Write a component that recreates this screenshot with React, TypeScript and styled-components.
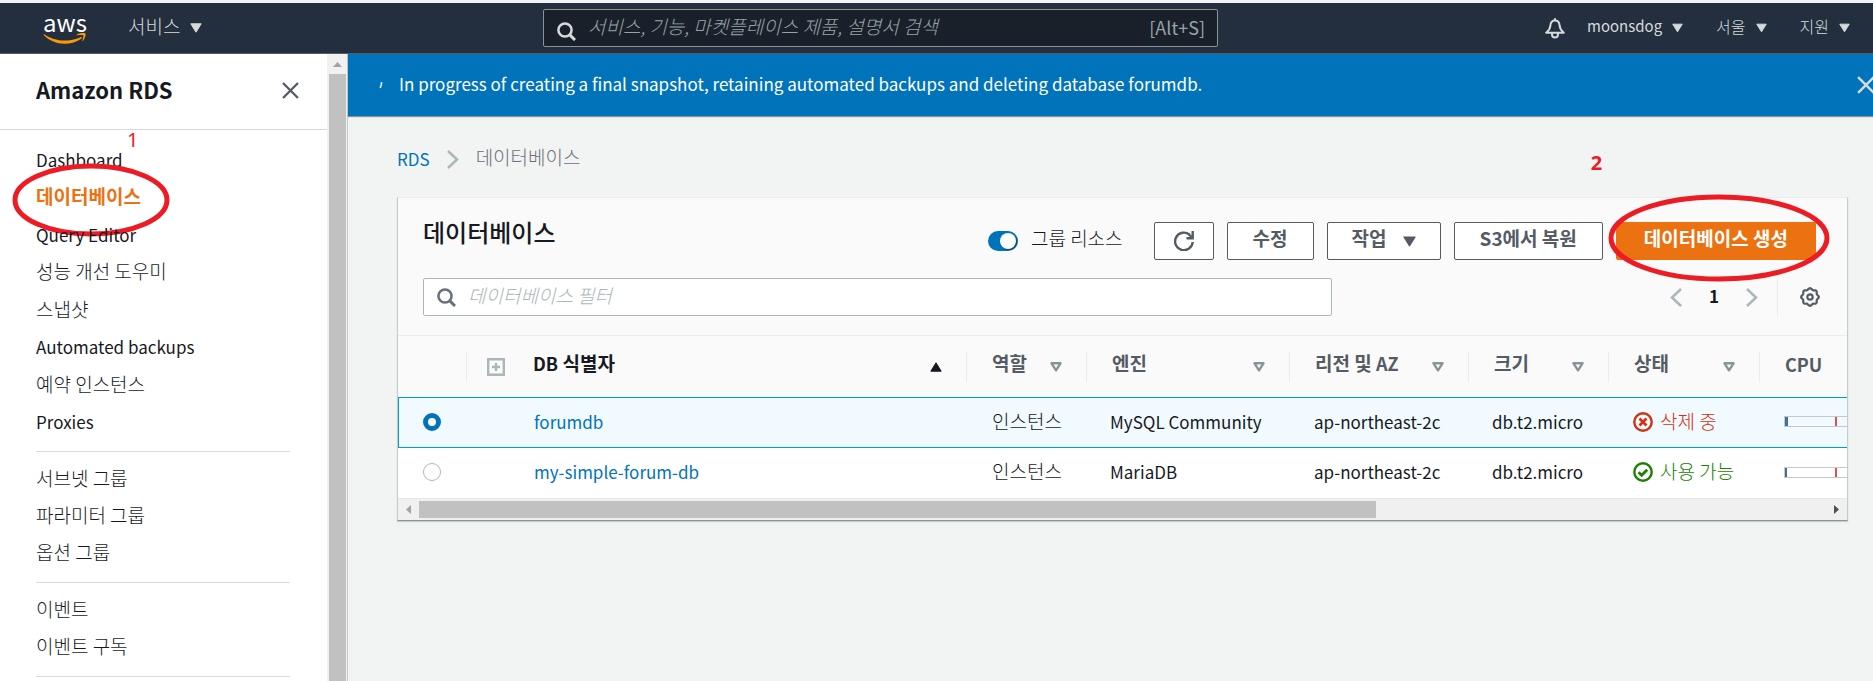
import React from "react";
import styled, { createGlobalStyle, css } from "styled-components";

const color = {
  ink: "#16191f",
  slate: "#545b64",
  muted: "#687078",
  soft: "#879596",
  pale: "#aab7b8",
  line: "#eaeded",
  rule: "#d5dbdb",
  link: "#0073bb",
  orange: "#ec7211",
  navy: "#232f3e",
  red: "#ed1c24",
};

const family = `"Noto Sans CJK KR", "Noto Sans", sans-serif`;

const GlobalStyle = createGlobalStyle`
  * { box-sizing: border-box; }
  body {
    margin: 0;
    background: #f2f3f3;
    color: ${color.ink};
    font: 400 17px/24px ${family};
    overflow-x: hidden;
  }
  button, input { font: inherit; color: inherit; }
  button { cursor: pointer; }
  a { text-decoration: none; color: inherit; }
`;

const ko = css`
  font-size: 19px;
  font-weight: 300;
`;

const Page = styled.div`
  display: flex;
  flex-direction: column;
  min-height: 100vh;
`;

/* ---------- top bar ---------- */

const TopBar = styled.header`
  display: grid;
  grid-template-columns: minmax(0, 543fr) minmax(0, 675fr) minmax(0, 655fr);
  align-items: center;
  height: 54px;
  border-top: 3px solid #f1f3f4;
  border-bottom: 1px solid ${color.slate};
  background: ${color.navy};
  color: ${color.rule};
`;

const Brand = styled.div`
  display: flex;
  align-items: center;
  gap: 41px;
  padding-left: 43px;
`;

const Logo = styled.a`
  display: flex;
  flex-direction: column;
  align-items: center;
  width: 44px;
  color: #fff;
  font-size: 24px;
  font-weight: 400;
  line-height: 20px;
  svg {
    display: block;
  }
`;

const MenuButton = styled.button<{ $small?: boolean }>`
  display: flex;
  align-items: center;
  gap: 10px;
  padding: 0;
  border: 0;
  background: none;
  ${ko}
  font-size: ${(p) => (p.$small ? "16px" : "19px")};
  line-height: 24px;
  span {
    padding-bottom: 4px;
  }
`;

const AccountName = styled.span`
  font-size: 15px;
  font-weight: 400;
`;

const GlobalSearch = styled.label`
  display: flex;
  align-items: center;
  gap: 12px;
  height: 38px;
  padding: 0 12px 0 13px;
  border: 1px solid ${color.soft};
  border-radius: 2px;
  background: #1a202a;
  color: #95a5a6;
  input {
    flex: 1;
    min-width: 0;
    padding: 0 0 4px;
    border: 0;
    outline: 0;
    background: none;
    ${ko}
    font-style: italic;
  }
  input::placeholder {
    color: #95a5a6;
    opacity: 1;
  }
  span {
    padding-bottom: 2px;
    font-size: 18px;
  }
  svg {
    margin-top: 6px;
    color: ${color.rule};
  }
`;

const Account = styled.nav`
  display: flex;
  align-items: center;
  justify-content: flex-end;
  gap: 33px;
  padding-right: 23px;
`;

const Alerts = styled.div`
  display: flex;
  align-items: center;
  gap: 22px;
`;

const IconButton = styled.button`
  display: flex;
  align-items: center;
  justify-content: center;
  padding: 0;
  border: 0;
  background: none;
`;

/* ---------- side navigation ---------- */

const Body = styled.div`
  display: flex;
  flex: 1;
`;

const Side = styled.aside`
  display: flex;
  flex: 0 0 348px;
  border-right: 1px solid #c8cccc;
  background: #fff;
`;

const SidePane = styled.div`
  flex: 1;
`;

const SideHead = styled.div`
  display: flex;
  align-items: center;
  justify-content: space-between;
  height: 76px;
  padding: 0 28px 2px 36px;
  border-bottom: 1px solid ${color.rule};
  color: ${color.slate};
  h2 {
    margin: 0;
    padding-bottom: 4px;
    color: ${color.ink};
    font-size: 22px;
    font-weight: 700;
  }
`;

const NavList = styled.nav`
  padding: 12px 37px 4px 36px;
`;

const NavGroup = styled.ul<{ $height: number }>`
  display: grid;
  grid-auto-rows: 1fr;
  align-items: center;
  height: ${(p) => p.$height}px;
  margin: 0;
  padding: 0;
  list-style: none;
`;

const NavRule = styled.hr`
  height: 1px;
  margin: 9px 0;
  border: 0;
  background: ${color.rule};
`;

const NavItem = styled.li`
  position: relative;
`;

const NavLink = styled.a<{ $ko?: boolean; $active?: boolean }>`
  display: block;
  ${(p) => p.$ko && ko}
  ${(p) =>
    p.$active &&
    css`
      color: ${color.orange};
      font-weight: 700;
    `}
  padding-bottom: ${(p) => (p.$ko ? "4px" : "2px")};
`;

const VTrack = styled.div`
  display: flex;
  flex-direction: column;
  align-items: center;
  width: 20px;
  padding-top: 8px;
  gap: 7px;
  background: #f1f1f1;
  color: #a3a3a3;
  svg {
    display: block;
  }
`;

const VThumb = styled.div`
  flex: 1;
  width: 17px;
  background: #c1c1c1;
`;

/* ---------- main column ---------- */

const Main = styled.main`
  flex: 1;
  min-width: 0;
`;

const Banner = styled.div`
  display: flex;
  align-items: center;
  height: 62px;
  padding: 0 0 0 31px;
  background: ${color.link};
  box-shadow: 0 1px 1px #8d9495;
  color: #fff;
  overflow: hidden;
  p {
    flex: 1;
    margin: 0 0 0 16px;
    padding-bottom: 2px;
  }
`;

const CloseBanner = styled(IconButton)`
  margin-right: -2px;
  color: ${color.rule};
`;

const Content = styled.div`
  padding: 29px 25px 40px 49px;
`;

const Crumbs = styled.nav`
  display: flex;
  align-items: center;
  gap: 17px;
  height: 28px;
  color: ${color.link};
  svg {
    color: ${color.pale};
  }
  span {
    ${ko}
    padding-bottom: 4px;
    color: ${color.muted};
  }
`;

const Card = styled.section`
  margin-top: 24px;
  border: 1px solid #c5cccd;
  border-top-color: ${color.line};
  border-bottom-color: ${color.soft};
  background: #fafafa;
  box-shadow: 0 1px 1px #c9cfd0;
`;

const CardHead = styled.div`
  display: flex;
  flex-direction: column;
  gap: 18px;
  padding: 24px 25px 19px;
  border-bottom: 1px solid ${color.line};
`;

const TitleRow = styled.div`
  display: flex;
  align-items: flex-start;
  justify-content: space-between;
  padding-right: 6px;
  h1 {
    margin: 0;
    font-size: 24px;
    font-weight: 500;
    line-height: 20px;
  }
`;

const Actions = styled.div`
  display: flex;
  align-items: center;
  gap: 13px;
`;

const GroupToggle = styled.label`
  display: flex;
  align-items: center;
  gap: 13px;
  margin-right: 18px;
  span {
    ${ko}
    padding-bottom: 6px;
  }
`;

const Switch = styled.input`
  appearance: none;
  display: flex;
  align-items: center;
  justify-content: flex-end;
  width: 30px;
  height: 20px;
  margin: 0;
  padding: 2px;
  border-radius: 10px;
  background: ${color.link};
  &::after {
    content: "";
    width: 16px;
    height: 16px;
    border-radius: 50%;
    background: #fff;
    box-shadow: 1px 1px 1px #16415f;
  }
`;

const Button = styled.button<{ $primary?: boolean; $pad?: number }>`
  display: flex;
  align-items: center;
  gap: 16px;
  height: 38px;
  padding: 0 ${(p) => p.$pad ?? 25}px;
  border: 1px solid ${(p) => (p.$primary ? color.orange : color.slate)};
  border-radius: 2px;
  background: ${(p) => (p.$primary ? color.orange : "#fff")};
  color: ${(p) => (p.$primary ? "#fff" : color.slate)};
  font-size: 19px;
  font-weight: 700;
  line-height: 24px;
  white-space: nowrap;
  span {
    padding-bottom: 6px;
  }
`;

const Marked = styled.div`
  position: relative;
`;

const FilterRow = styled.div`
  display: flex;
  align-items: center;
  justify-content: space-between;
`;

const Filter = styled.label`
  display: flex;
  align-items: center;
  gap: 12px;
  width: 65%;
  height: 38px;
  padding: 0 13px;
  border: 1px solid ${color.pale};
  border-radius: 2px;
  background: #fff;
  color: ${color.muted};
  input {
    flex: 1;
    padding: 0 0 4px;
    border: 0;
    outline: 0;
    background: none;
    ${ko}
    font-style: italic;
  }
  input::placeholder {
    color: ${color.pale};
    opacity: 1;
  }
`;

const Pager = styled.div`
  display: flex;
  align-items: center;
  gap: 27px;
  height: 38px;
  color: ${color.pale};
  b {
    padding-bottom: 2px;
    color: ${color.ink};
    font-weight: 600;
  }
`;

const Settings = styled(IconButton)`
  height: 38px;
  margin-left: -8px;
  padding: 0 2px 0 22px;
  border-left: 1px solid ${color.line};
  color: ${color.slate};
`;

/* ---------- table ---------- */

const TableClip = styled.div`
  overflow: hidden;
`;

const Table = styled.table`
  width: 100%;
  border-collapse: separate;
  border-spacing: 0;
  table-layout: fixed;
  background: #fff;
`;

const Th = styled.th<{ $width?: number; $sorted?: boolean }>`
  width: ${(p) => (p.$width ? `${p.$width}px` : "auto")};
  height: 61px;
  padding: 0;
  background: #fafafa;
  color: ${(p) => (p.$sorted ? color.ink : color.slate)};
  text-align: left;
  vertical-align: middle;
`;

const HeadCell = styled.div<{ $last?: boolean; $tight?: boolean }>`
  display: flex;
  align-items: center;
  gap: ${(p) => (p.$tight ? 28 : 20)}px;
  height: 30px;
  padding: 0 24px 0 ${(p) => (p.$tight ? 20 : 25)}px;
  border-right: ${(p) => (p.$last ? "0" : `1px solid ${color.line}`)};
  svg {
    flex: none;
  }
`;

const HeadLabel = styled.span`
  flex: 1;
  padding-bottom: 8px;
  font-size: 19px;
  font-weight: 700;
  white-space: nowrap;
`;

const LatinLabel = styled.span`
  font-size: 18px;
`;

const CpuLabel = styled.span`
  padding-bottom: 6px;
  font-size: 18px;
  font-weight: 700;
`;

const Row = styled.tr<{ $selected?: boolean }>`
  background: ${(p) => (p.$selected ? "#f1faff" : "#fff")};
  td {
    height: ${(p) => (p.$selected ? 51 : 50)}px;
    border-top: 1px solid ${(p) => (p.$selected ? "#00a1c9" : "#fff")};
    border-bottom: 1px solid ${(p) => (p.$selected ? "#00a1c9" : "#fff")};
  }
  td:first-child {
    border-left: 1px solid ${(p) => (p.$selected ? "#00a1c9" : "#fff")};
  }
`;

const Td = styled.td<{ $left?: number }>`
  padding: 0 0 2px ${(p) => p.$left ?? 25}px;
  overflow: hidden;
  white-space: nowrap;
  vertical-align: middle;
`;

const RoleText = styled.div`
  ${ko}
  padding-bottom: 2px;
`;

const DbLink = styled.a`
  color: ${color.link};
`;

const Radio = styled.input`
  appearance: none;
  display: block;
  width: 18px;
  height: 18px;
  margin: 0;
  border: 1px solid ${color.pale};
  border-radius: 50%;
  background: #fff;
  &:checked {
    border: 5px solid ${color.link};
  }
`;

const Status = styled.div<{ $color: string }>`
  display: flex;
  align-items: center;
  gap: 7px;
  color: ${(p) => p.$color};
  span {
    ${ko}
    padding-bottom: 2px;
  }
`;

const Meter = styled.div`
  display: flex;
  width: 120px;
  height: 11px;
  border: 1px solid #c5c8ca;
`;

const MeterFill = styled.i<{ $width: number }>`
  width: ${(p) => p.$width}px;
  background: #486f92;
`;

const MeterMark = styled.i<{ $gap: number }>`
  width: 2px;
  margin-left: ${(p) => p.$gap}px;
  background: #df4f58;
`;

const HTrack = styled.div`
  display: flex;
  align-items: center;
  height: 22px;
  padding: 0 8px;
  gap: 8px;
  border-top: 1px solid #e6e8e8;
  background: #f0f0f0;
  color: #a3a3a3;
  svg {
    flex: none;
  }
  svg:last-child {
    color: #505050;
  }
`;

const HRail = styled.div`
  flex: 1;
  height: 17px;
  div {
    width: 68%;
    height: 17px;
    background: #c1c1c1;
  }
`;

/* ---------- hand-drawn marks ---------- */

const Ring = styled.svg<{ $x: number; $y: number }>`
  position: absolute;
  left: ${(p) => p.$x}px;
  top: ${(p) => p.$y}px;
  overflow: visible;
  pointer-events: none;
  fill: none;
  stroke: ${color.red};
`;

const Step = styled.span<{ $x: number; $y: number; $bold?: boolean }>`
  position: absolute;
  left: ${(p) => p.$x}px;
  top: ${(p) => p.$y}px;
  color: ${color.red};
  font-family: "Noto Sans", sans-serif;
  font-size: 20px;
  font-weight: ${(p) => (p.$bold ? 700 : 400)};
  pointer-events: none;
`;

/* ---------- icons ---------- */

const Caret = ({ w = 12, h = 10 }: { w?: number; h?: number }) => (
  <svg width={w} height={h} viewBox="0 0 12 10" aria-hidden="true">
    <path d="M.8.8h10.400L6 9.200z" fill="currentColor" stroke="currentColor" strokeLinejoin="round" />
  </svg>
);

const CaretUp = () => (
  <svg width="12" height="10" viewBox="0 0 12 10" aria-hidden="true">
    <path d="M.8 9.200h10.400L6 .8z" fill="currentColor" stroke="currentColor" strokeLinejoin="round" />
  </svg>
);

const CaretOutline = () => (
  <svg width="12" height="10" viewBox="0 0 12 10" fill="none" stroke={color.soft} strokeWidth="2.400" strokeLinejoin="round" aria-hidden="true">
    <path d="M1.500 1.300h9L6 8.300z" />
  </svg>
);

const Cross = ({ size = 17 }: { size?: number }) => (
  <svg width={size} height={size} viewBox="0 0 17 17" fill="none" stroke="currentColor" strokeWidth="2.300" aria-hidden="true">
    <path d="M1 1l15 15M16 1L1 16" />
  </svg>
);

const Search = () => (
  <svg width="19" height="19" viewBox="0 0 19 19" fill="none" stroke="currentColor" strokeWidth="2.500" aria-hidden="true">
    <circle cx="8" cy="8" r="6.600" />
    <path d="M12.600 12.600l5.400 5.400" strokeWidth="3" />
  </svg>
);

const Chevron = ({ left }: { left?: boolean }) => (
  <svg width="12" height="19" viewBox="0 0 12 19" fill="none" stroke="currentColor" strokeWidth="2.500" aria-hidden="true">
    <path d={left ? "M11 1L2 9.500 11 18" : "M1 1l9 8.500L1 18"} />
  </svg>
);

const Bell = () => (
  <svg width="20" height="21" viewBox="0 0 20 21" fill="none" stroke="currentColor" strokeWidth="2" strokeLinejoin="round" aria-hidden="true">
    <path d="M10 2.500c-3.200 0-4.400 2.200-4.600 5-.2 3.500-1.500 5-4.200 7.200h17.600c-2.700-2.200-4-3.700-4.200-7.200-.2-2.800-1.400-5-4.600-5z" />
    <path d="M10 .3v2" />
    <path d="M7 15v1.500a3 3 0 0 0 6 0V15" />
  </svg>
);

const Refresh = () => (
  <svg width="20" height="20" viewBox="0 0 20 20" fill="none" stroke="currentColor" strokeWidth="2.400" aria-hidden="true">
    <path d="M18.700 11A8.800 8.800 0 1 1 15.500 3.600" />
    <path d="M18.700 0v7.200H12.500" />
    <path d="M14.500 3l4 4" />
  </svg>
);

const Gear = () => {
  const points = Array.from({ length: 64 }, (_, i) => {
    const a = (i / 64) * Math.PI * 2;
    const r = 8.1 + 0.75 * Math.cos(a * 8);
    return `${(10 + r * Math.cos(a)).toFixed(2)},${(10 + r * Math.sin(a)).toFixed(2)}`;
  }).join(" ");
  return (
    <svg width="20" height="20" viewBox="0 0 20 20" fill="none" stroke="currentColor" strokeWidth="2.200" aria-hidden="true">
      <polygon points={points} />
      <circle cx="10" cy="10" r="2.700" />
    </svg>
  );
};

const ExpandBox = () => (
  <svg width="18" height="18" viewBox="0 0 18 18" fill="none" stroke={color.pale} strokeWidth="2.400" aria-hidden="true">
    <path d="M1.200 1.200h15.600v15.600H1.200zM9 5v8M5 9h8" />
  </svg>
);

const StatusIcon = ({ ok }: { ok: boolean }) => (
  <svg width="20" height="20" viewBox="0 0 20 20" fill="none" stroke="currentColor" strokeWidth="2.400" aria-hidden="true">
    <circle cx="10" cy="10" r="8.700" />
    <path d={ok ? "M5.500 10.200l3.200 3 5.500-5.500" : "M6.500 6.500l7 7M13.500 6.500l-7 7"} strokeWidth="2.800" />
  </svg>
);

const Smile = () => (
  <svg width="44" height="12" viewBox="0 0 44 12" fill="#f90" aria-hidden="true">
    <path d="M1.300 2.300C7 6.300 14 8.600 21.500 8.600c5.500 0 11-1.200 16.200-3.400 1-.4 1.800.6.900 1.300C34 10 27.500 11.700 21.700 11.700 13.600 11.700 6.400 8.700.9 3.200c-.5-.5-.1-1.200.4-.9z" />
    <path d="M33.500 2.800c2.500-1.900 7-2.300 8.700-1.500 1 .8.200 5-2.200 7.400-.5.400-.9.200-.7-.3.600-1.500 1.500-4.300 1-5-.6-.7-4.200-.5-6.200-.2-.6.100-.9-.2-.6-.4z" />
  </svg>
);

const Spinner = () => (
  <svg width="4" height="8" viewBox="0 0 4 8" aria-hidden="true">
    <path d="M2.600 1q0 3-1.400 6" fill="none" stroke="#e5f2fa" strokeWidth="1.600" />
  </svg>
);

const ArrowTip = ({ d, w, h }: { d: string; w: number; h: number }) => (
  <svg width={w} height={h} viewBox={`0 0 ${w} ${h}`} aria-hidden="true">
    <path d={d} fill="currentColor" />
  </svg>
);

/* ---------- data ---------- */

type NavEntry = { label: string; ko?: boolean; active?: boolean };

const navGroups: { height: number; items: NavEntry[] }[] = [
  {
    height: 300,
    items: [
      { label: "Dashboard" },
      { label: "데이터베이스", ko: true, active: true },
      { label: "Query Editor" },
      { label: "성능 개선 도우미", ko: true },
      { label: "스냅샷", ko: true },
      { label: "Automated backups" },
      { label: "예약 인스턴스", ko: true },
      { label: "Proxies" },
    ],
  },
  {
    height: 112,
    items: [
      { label: "서브넷 그룹", ko: true },
      { label: "파라미터 그룹", ko: true },
      { label: "옵션 그룹", ko: true },
    ],
  },
  {
    height: 75,
    items: [
      { label: "이벤트", ko: true },
      { label: "이벤트 구독", ko: true },
    ],
  },
];

const columns: { label: React.ReactNode; key: string; width: number }[] = [
  { key: "role", label: "역할", width: 120 },
  { key: "engine", label: "엔진", width: 203 },
  { key: "region", label: <>리전 및 <LatinLabel>AZ</LatinLabel></>, width: 179 },
  { key: "size", label: "크기", width: 140 },
  { key: "status", label: "상태", width: 151 },
];

const databases = [
  { id: "forumdb", engine: "MySQL Community", status: "삭제 중", ok: false, cpu: 3 },
  { id: "my-simple-forum-db", engine: "MariaDB", status: "사용 가능", ok: true, cpu: 2 },
];

export default function App() {
  return (
    <Page>
      <GlobalStyle />
      <TopBar>
        <Brand>
          <Logo href="#">
            aws
            <Smile />
          </Logo>
          <MenuButton>
            <span>서비스</span> <Caret />
          </MenuButton>
        </Brand>
        <GlobalSearch>
          <Search />
          <input aria-label="검색" placeholder="서비스, 기능, 마켓플레이스 제품, 설명서 검색" />
          <span>[Alt+S]</span>
        </GlobalSearch>
        <Account>
          <Alerts>
            <IconButton aria-label="알림">
              <Bell />
            </IconButton>
            <MenuButton $small>
              <AccountName>moonsdog</AccountName> <Caret w={11} />
            </MenuButton>
          </Alerts>
          <MenuButton $small>
            <span>서울</span> <Caret w={11} />
          </MenuButton>
          <MenuButton $small>
            <span>지원</span> <Caret w={11} />
          </MenuButton>
        </Account>
      </TopBar>

      <Body>
        <Side>
          <SidePane>
            <SideHead>
              <h2>Amazon RDS</h2>
              <IconButton aria-label="닫기">
                <Cross />
              </IconButton>
            </SideHead>
            <NavList>
              {navGroups.map((group) => (
                <React.Fragment key={group.height}>
                  <NavGroup $height={group.height}>
                    {group.items.map((item) => (
                      <NavItem key={item.label}>
                        <NavLink href="#" $ko={item.ko} $active={item.active}>
                          {item.label}
                        </NavLink>
                        {item.active && (
                          <>
                            <Ring $x={-23} $y={-21} width="157" height="73" strokeWidth="5" aria-hidden="true">
                              <ellipse cx="78" cy="37" rx="76" ry="34" />
                            </Ring>
                            <Step $x={91} $y={-56}>1</Step>
                          </>
                        )}
                      </NavItem>
                    ))}
                  </NavGroup>
                  <NavRule />
                </React.Fragment>
              ))}
            </NavList>
          </SidePane>
          <VTrack>
            <ArrowTip w={9} h={5} d="M0 5L4.500 0 9 5z" />
            <VThumb />
          </VTrack>
        </Side>

        <Main>
          <Banner role="status">
            <Spinner />
            <p>
              In progress of creating a final snapshot, retaining automated backups and deleting database forumdb.
            </p>
            <CloseBanner aria-label="알림 닫기">
              <Cross size={18} />
            </CloseBanner>
          </Banner>

          <Content>
            <Crumbs>
              <a href="#">RDS</a>
              <Chevron />
              <span>데이터베이스</span>
            </Crumbs>

            <Card>
              <CardHead>
                <TitleRow>
                  <h1>데이터베이스</h1>
                  <Actions>
                    <GroupToggle>
                      <Switch type="checkbox" role="switch" defaultChecked />
                      <span>그룹 리소스</span>
                    </GroupToggle>
                    <Button $pad={19} aria-label="새로 고침">
                      <Refresh />
                    </Button>
                    <Button>
                      <span>수정</span>
                    </Button>
                    <Button $pad={24}>
                      <span>작업</span>
                      <Caret w={13} h={11} />
                    </Button>
                    <Button>
                      <span>S3에서 복원</span>
                    </Button>
                    <Marked>
                      <Button $primary $pad={27}>
                        <span>데이터베이스 생성</span>
                      </Button>
                      <Ring $x={-6} $y={-27} width="221" height="87" strokeWidth="5" aria-hidden="true">
                        <ellipse cx="109" cy="43" rx="108" ry="41" />
                      </Ring>
                      <Step $x={-25} $y={-71} $bold>2</Step>
                    </Marked>
                  </Actions>
                </TitleRow>
                <FilterRow>
                  <Filter>
                    <Search />
                    <input aria-label="데이터베이스 필터" placeholder="데이터베이스 필터" />
                  </Filter>
                  <Pager>
                    <IconButton aria-label="이전 페이지">
                      <Chevron left />
                    </IconButton>
                    <b>1</b>
                    <IconButton aria-label="다음 페이지">
                      <Chevron />
                    </IconButton>
                    <Settings aria-label="설정">
                      <Gear />
                    </Settings>
                  </Pager>
                </FilterRow>
              </CardHead>

              <TableClip>
                <Table>
                  <thead>
                    <tr>
                      <Th $width={69}>
                        <HeadCell />
                      </Th>
                      <Th $sorted>
                        <HeadCell $tight>
                          <ExpandBox />
                          <HeadLabel>
                            <LatinLabel>DB</LatinLabel> 식별자
                          </HeadLabel>
                          <CaretUp />
                        </HeadCell>
                      </Th>
                      {columns.map((column) => (
                        <Th key={column.key} $width={column.width}>
                          <HeadCell>
                            <HeadLabel>{column.label}</HeadLabel>
                            <CaretOutline />
                          </HeadCell>
                        </Th>
                      ))}
                      <Th $width={87}>
                        <HeadCell $last>
                          <CpuLabel>CPU</CpuLabel>
                        </HeadCell>
                      </Th>
                    </tr>
                  </thead>
                  <tbody>
                    {databases.map((db, index) => (
                      <Row key={db.id} $selected={index === 0}>
                        <Td $left={24}>
                          <Radio type="radio" name="database" aria-label={db.id} defaultChecked={index === 0} />
                        </Td>
                        <Td $left={67}>
                          <DbLink href="#">{db.id}</DbLink>
                        </Td>
                        <Td>
                          <RoleText>인스턴스</RoleText>
                        </Td>
                        <Td $left={23}>{db.engine}</Td>
                        <Td $left={24}>ap-northeast-2c</Td>
                        <Td $left={23}>db.t2.micro</Td>
                        <Td $left={24}>
                          <Status $color={db.ok ? "#1d8102" : "#d13212"}>
                            <StatusIcon ok={db.ok} />
                            <span>{db.status}</span>
                          </Status>
                        </Td>
                        <Td $left={24}>
                          <Meter>
                            <MeterFill $width={db.cpu} />
                            <MeterMark $gap={50 - db.cpu} />
                          </Meter>
                        </Td>
                      </Row>
                    ))}
                  </tbody>
                </Table>
              </TableClip>
              <HTrack>
                <ArrowTip w={5} h={9} d="M5 0v9L0 4.500z" />
                <HRail>
                  <div />
                </HRail>
                <ArrowTip w={5} h={9} d="M0 0v9l5-4.500z" />
              </HTrack>
            </Card>
          </Content>
        </Main>
      </Body>
    </Page>
  );
}
